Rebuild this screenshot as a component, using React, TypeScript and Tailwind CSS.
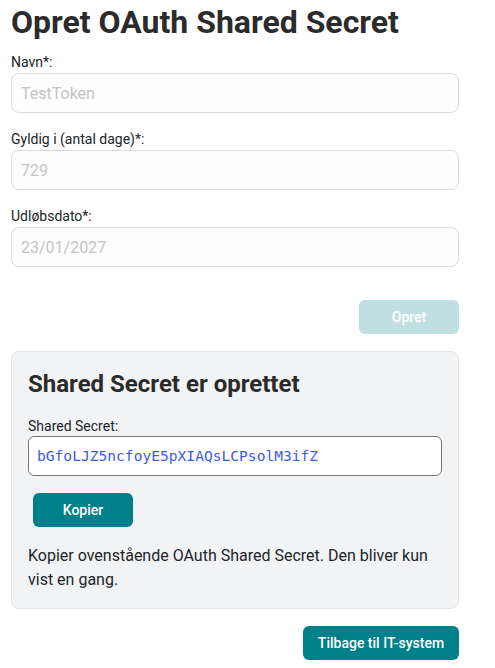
import React from "react";

const Field = ({ label, value }: { label: string; value: string }) => (
  <div className="flex flex-col">
    <label className="text-[14px] leading-5 text-[#212529] mb-[1px]">{label}</label>
    <input
      disabled
      value={value}
      readOnly
      className="h-[40px] w-full rounded-[8px] border border-[#dcdcdc] bg-[#fdfdfd] px-[9px] text-[16px] text-[#c4c4c4] outline-none"
    />
  </div>
);

export default function App() {
  return (
    <div className="w-[495px] min-h-[668px] bg-white px-[11px] pt-[2px] font-['Roboto',sans-serif] text-[#212529]">
      <div className="w-[448px]">
        <h1 className="text-[32px] font-bold leading-[40px] text-[#2b2b2b]">Opret OAuth Shared Secret</h1>

        <div className="mt-[10px] flex flex-col gap-[16px]">
          <Field label="Navn*:" value="TestToken" />
          <Field label="Gyldig i (antal dage)*:" value="729" />
          <Field label="Udløbsdato*:" value="23/01/2027" />
        </div>

        <div className="mt-[33px] flex justify-end">
          <button className="h-[34px] w-[100px] rounded-[6px] bg-[#c0dfe2] text-[14px] font-medium text-white">
            Opret
          </button>
        </div>

        <div className="mt-[17px] rounded-[8px] border border-[#e3e5e8] bg-[#f2f3f5] px-[16px] pt-[16px] pb-[16px]">
          <h2 className="text-[24px] font-bold leading-[32px] text-[#2b2b2b]">Shared Secret er oprettet</h2>
          <div className="mt-[16px] text-[14px] leading-5">Shared Secret:</div>
          <div className="flex h-[40px] w-[414px] items-center rounded-[6px] border border-[#767676] bg-white px-[8px] font-['DejaVu_Sans_Mono',monospace] text-[14.6px] text-[#3e5be8]">
            bGfoLJZ5ncfoyE5pXIAQsLCPsolM3ifZ
          </div>
          <button className="mt-[17px] ml-[5px] h-[34px] w-[100px] rounded-[6px] bg-[#00808b] text-[14px] font-medium text-white">
            Kopier
          </button>
          <p className="mt-[17px] text-[16px] leading-[24px]">
            Kopier ovenstående OAuth Shared Secret. Den bliver kun vist en gang.
          </p>
        </div>

        <div className="mt-[17px] flex justify-end">
          <button className="h-[34px] w-[156px] rounded-[6px] bg-[#00808b] text-[14px] font-medium text-white">
            Tilbage til IT-system
          </button>
        </div>
      </div>
    </div>
  );
}
